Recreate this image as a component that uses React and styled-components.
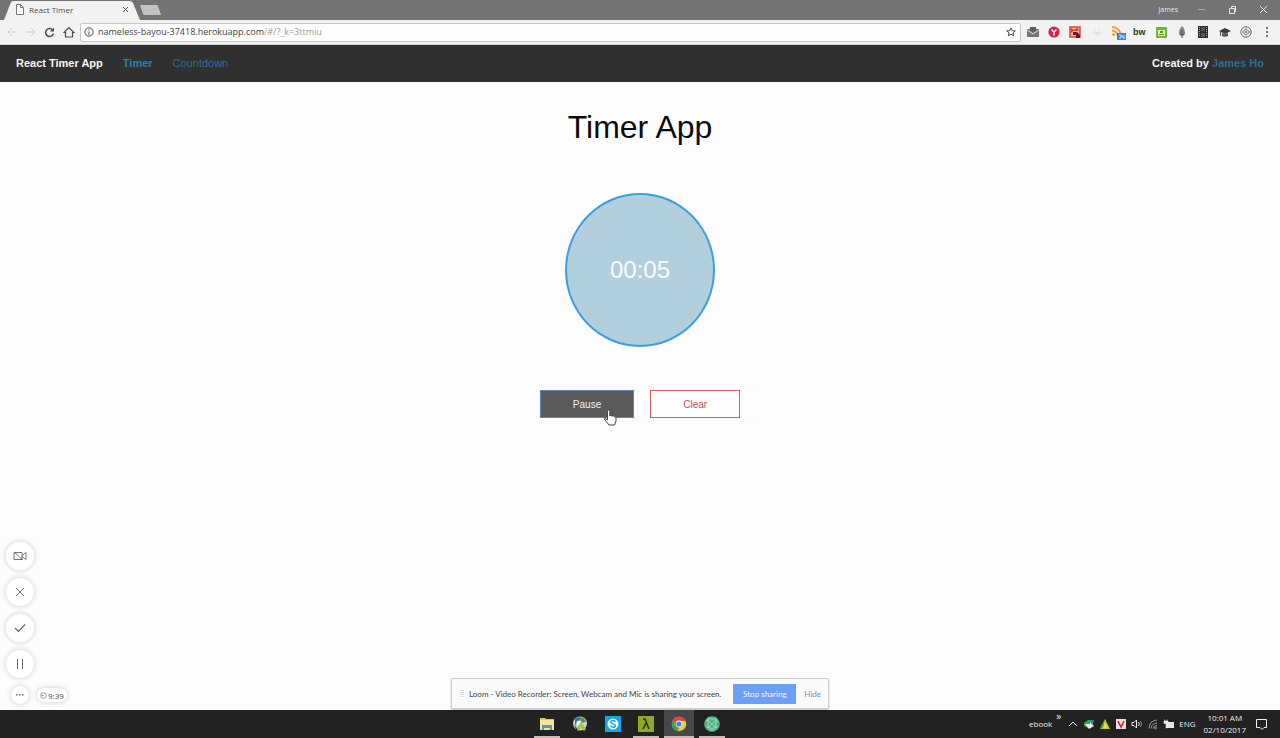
import React from 'react';
import styled, { createGlobalStyle, css } from 'styled-components';

const ui = '"Open Sans", "Noto Sans", sans-serif';
const arial = '"Liberation Sans", Arial, sans-serif';

const GlobalStyle = createGlobalStyle`
  *, *::before, *::after { box-sizing: border-box; }
  body { margin: 0; background: #fdfdfd; font-family: ${arial}; }
  button, input { font: inherit; margin: 0; }
  a { text-decoration: none; }
`;

const Screen = styled.div`
  display: flex;
  flex-direction: column;
  min-height: 100vh;
`;

const PlainButton = styled.button`
  display: inline-flex;
  align-items: center;
  justify-content: center;
  padding: 0;
  border: 0;
  background: none;
  color: inherit;
  cursor: pointer;
`;

/* ---------- browser window ---------- */

const TabStrip = styled.div`
  display: flex;
  align-items: flex-start;
  height: 20px;
  padding-left: 4px;
  background: #737373;
  font-family: ${ui};
`;

const Tab = styled.div`
  position: relative;
  display: flex;
  align-items: center;
  width: 136px;
  height: 20px;
  padding: 0 9px 1px 11px;
  color: #4c4c4c;
  font-size: 8px;
`;

const TabShape = styled.svg`
  position: absolute;
  inset: 0;
  width: 100%;
  height: 100%;
`;

const TabIcon = styled.svg`
  position: relative;
  width: 9px;
  height: 11px;
`;

const TabTitle = styled.span`
  position: relative;
  flex: 1;
  margin-left: 5px;
  padding-bottom: 1px;
`;

const TabClose = styled(PlainButton)`
  position: relative;
  width: 11px;
  height: 11px;
`;

const NewTab = styled(PlainButton)`
  margin-top: 4px;
`;

const WindowControls = styled.div`
  display: flex;
  align-items: center;
  height: 18px;
  margin-left: auto;
  padding-right: 9px;
  color: #e9e9e9;
  font-size: 7px;
`;

const WindowButton = styled(PlainButton)`
  width: 16px;
  height: 16px;
  margin-left: 15px;
`;

const Toolbar = styled.div`
  display: flex;
  align-items: center;
  height: 25px;
  padding: 0 2px;
  background: #f2f2f2;
  border-bottom: 1px solid #d4d4d4;
`;

const ToolButton = styled(PlainButton)`
  width: 19px;
  height: 19px;
  color: ${(p) => (p.$dim ? '#cccccc' : '#4d4d4d')};
`;

const AddressBar = styled.div`
  display: flex;
  flex: 1;
  align-items: center;
  height: 19px;
  margin: 0 1px 0 2px;
  padding: 0 4px 0 3px;
  border: 1px solid #c6c6c6;
  border-radius: 2px;
  background: #fefefe;
  color: #4d4d4d;
  font-family: ${ui};
`;

const Url = styled.div`
  flex: 1;
  margin-left: 4px;
  font-size: 9px;
  line-height: 16px;
  color: #3f3f3f;
`;

const UrlPath = styled.span`
  color: #9a9a9a;
`;

const Extensions = styled.div`
  display: grid;
  grid-template-columns: repeat(12, 1fr);
  width: 256px;
`;

const Extension = styled(PlainButton)`
  height: 20px;
`;

/* ---------- timer site ---------- */

const NavBar = styled.nav`
  display: flex;
  align-items: center;
  height: 37px;
  padding: 0 16px 2px;
  background: #303030;
  color: #f8f8f8;
  font-size: 11px;
  line-height: 16px;
`;

const Brand = styled.strong`
  margin-right: 20px;
`;

const NavLink = styled.a`
  margin-right: 20px;
  color: ${(p) => (p.$active ? '#2580bb' : '#236f9d')};
  font-weight: ${(p) => (p.$active ? 700 : 400)};
`;

const Credit = styled.strong`
  margin-left: auto;
  a { color: #226f9d; }
`;

const Page = styled.main`
  position: relative;
  display: flex;
  flex: 1;
  flex-direction: column;
  align-items: center;
  padding: 25px 0 96px;
  background: #fdfdfd;
`;

const Title = styled.h1`
  margin: 0;
  color: #0c0c0c;
  font-size: 32px;
  font-weight: 400;
  line-height: 40px;
`;

const Clock = styled.div`
  display: flex;
  align-items: center;
  justify-content: center;
  width: 150px;
  height: 154px;
  margin-top: 46px;
  border: 2px solid #3c9fdc;
  border-radius: 50%;
  background: #b2cfde;
  color: #fbfdff;
  font-size: 24px;
`;

const Controls = styled.div`
  display: flex;
  gap: 16px;
  margin-top: 43px;
`;

const ActionButton = styled.button`
  position: relative;
  height: 28px;
  padding: 0 32px;
  border: 1px solid #cf5f5b;
  background: #fefefe;
  color: #c9504d;
  font-family: ${arial};
  font-size: 10px;
  cursor: pointer;
  ${(p) => p.$focused && css`
    border-color: #6085b5;
    background: #5a5a5a;
    color: #f2f2f2;
  `}
`;

const Pointer = styled.svg`
  position: absolute;
  left: 62px;
  top: 18px;
  width: 14px;
  height: 17px;
`;

/* ---------- recorder overlay ---------- */

const RecorderDock = styled.div`
  position: absolute;
  left: 6px;
  bottom: 6px;
  display: flex;
  flex-direction: column;
  align-items: flex-start;
  gap: 8px;
  color: #666;
`;

const RecorderButton = styled(PlainButton)`
  width: ${(p) => (p.$small ? 18 : 28)}px;
  height: ${(p) => (p.$small ? 18 : 28)}px;
  border-radius: 50%;
  background: #fff;
  box-shadow: 0 0 5px 1px rgba(0, 0, 0, 0.15);
`;

const RecorderFoot = styled.div`
  display: flex;
  align-items: center;
  gap: 8px;
  padding-left: 5px;
`;

const Elapsed = styled.div`
  display: flex;
  align-items: center;
  gap: 1px;
  height: 14px;
  padding: 0 3px;
  border-radius: 7px;
  background: #fff;
  box-shadow: 0 0 4px 1px rgba(0, 0, 0, 0.14);
  color: #444;
  font-family: ${ui};
  font-size: 8px;
`;

const ShareBar = styled.div`
  position: absolute;
  left: 50%;
  bottom: 1px;
  display: flex;
  align-items: center;
  width: 378px;
  height: 31px;
  padding: 0 7px 0 8px;
  transform: translateX(-50%);
  border: 1px solid #cfcfcf;
  border-radius: 2px;
  background: #fafafa;
  box-shadow: 0 1px 2px rgba(0, 0, 0, 0.25);
  color: #444;
  font-family: Lato, ${ui};
  font-size: 8px;
  white-space: nowrap;
`;

const ShareText = styled.span`
  flex: 1;
  margin-left: 5px;
`;

const StopButton = styled(PlainButton)`
  width: 63px;
  height: 20px;
  background: #6c9ff5;
  color: #f5f8ff;
`;

const HideButton = styled(PlainButton)`
  margin-left: 8px;
  color: #6a8fc8;
`;

/* ---------- taskbar ---------- */

const Taskbar = styled.footer`
  display: grid;
  grid-template-columns: 1fr auto 1fr;
  height: 28px;
  background: #222222;
  color: #eeeeee;
  font-family: ${ui};
  font-size: 8px;
`;

const Apps = styled.div`
  display: flex;
  grid-column: 2;
  gap: 3px;
  padding-right: 22px;
`;

const AppButton = styled(PlainButton)`
  flex-direction: column;
  justify-content: flex-end;
  gap: 4px;
  width: 30px;
  background: ${(p) => (p.$active ? '#484848' : 'none')};
  &::after {
    content: '';
    width: ${(p) => (p.$active ? 30 : 26)}px;
    height: 2px;
    background: ${(p) => (p.$running ? '#c8b9b5' : 'transparent')};
  }
`;

const Tray = styled.div`
  display: flex;
  align-items: center;
  justify-content: flex-end;
  gap: 4px;
  padding-right: 12px;
`;

const TrayLabel = styled.span`
  padding-bottom: 2px;
`;

const TrayChevron = styled.span`
  align-self: flex-start;
  margin-right: 2px;
  font-size: 10px;
  line-height: 12px;
`;

const DateTime = styled.time`
  margin: 0 5px 0 4px;
  line-height: 12px;
  text-align: center;
`;

/* ---------- drawings ---------- */

const Line = ({ w = 12, h = w, box = `0 0 ${w} ${h}`, sw = 1, children, ...rest }) => (
  <svg width={w} height={h} viewBox={box} fill="none" stroke="currentColor" strokeWidth={sw} aria-hidden="true" {...rest}>
    {children}
  </svg>
);

const ExtensionLabel = styled.b`
  color: #173d18;
  font-family: ${arial};
  font-size: 9px;
  line-height: 12px;
`;

const extensions = [
  ['Mail', <Line w={12} stroke="none"><path d="M0 3h12v8H0z" fill="#777" /><path d="M0 4l6 4 6-4" stroke="#dedede" /><path d="M3 1h6v3L6 6 3 4z" fill="#5d5d5d" /></Line>],
  ['Yandex', <Line w={12} stroke="none"><circle cx="6" cy="6" r="5.600" fill="#df1f52" /><path d="M3.600 3.500L6 6.200l2.400-2.700M6 6v3.500" stroke="#fff" strokeWidth="1.500" /></Line>],
  ['Picture', <Line w={12} stroke="none"><path d="M1 1h10v10H1z" fill="#f0b1a8" stroke="#d8473c" strokeWidth="1.500" /><path d="M2 2l3 2 3-2 2 2-2 1H4L2 7z" fill="#cf3e35" /><path d="M4 6h4l3 3v3H7V9H4z" fill="#5f201a" /></Line>],
  ['Paw', <Line w={12} stroke="#dadada"><path d="M3 3l2 2M9 3L7 5M2 7h3M7 7h3M5 10l1-4 2 4" /></Line>],
  ['Feed', <Line w={16} h={16} stroke="none"><path d="M2 3a9 9 0 0 1 9 9M2 6.500A5.500 5.500 0 0 1 7.500 12" stroke="#eca23a" strokeWidth="2" /><circle cx="3.500" cy="10.500" r="1.500" fill="#eca23a" /><rect x="7" y="9" width="9" height="7" fill="#4382df" /><path d="M9 11h2v3H9M12 11v2h2m0-2v4" stroke="#c8dcf9" /></Line>],
  ['Builtwith', <ExtensionLabel>bw</ExtensionLabel>],
  ['Image tool', <Line w={12} stroke="none"><rect x="1" y="1" width="11" height="11" rx="1" fill="#79b529" /><path d="M3 4h7v6H3z" fill="#d8ecb7" /><path d="M5 5h3v2H5zM4 8h5v1H4z" fill="#609720" /></Line>],
  ['Drop', <Line w={12} stroke="none"><path d="M6 0c2 2 3 4 3 7a3 3 0 0 1-6 0c0-3 1-5 3-7z" fill="#858585" /><path d="M6 4v8M4 8l2 1 2-1" stroke="#555" /></Line>],
  ['Film', <Line w={12} stroke="none"><path d="M1 0h10v12H1z" fill="#2d2d2d" /><path d="M4 1h4v4H4zM4 7h4v4H4z" fill="#555" /><path d="M2.500 1v10M9.500 1v10" stroke="#aaa" strokeDasharray="1 1" /></Line>],
  ['Scholar', <Line w={12} stroke="none"><path d="M0 5l6-3 6 3-6 3z" fill="#3c3c3c" /><path d="M3 7v3c2 1 4 1 6 0V7L6 8z" fill="#555" /><path d="M1.500 5v5" stroke="#555" /></Line>],
  ['Target', <Line w={12} stroke="#6b6b6b"><circle cx="6" cy="6" r="5.200" /><path d="M6 2.500L9.500 6 6 9.500 2.500 6z" /><circle cx="6" cy="6" r="1" /></Line>],
  ['Menu', <Line w={12} stroke="none" fill="#555"><circle cx="6" cy="2" r="1.100" /><circle cx="6" cy="6" r="1.100" /><circle cx="6" cy="10" r="1.100" /></Line>],
];

const apps = [
  { name: 'File Explorer', running: true, icon: <Line w={16} stroke="none"><path d="M1 2h5l1 1h8v11H1z" fill="#e9c65c" /><path d="M1 4h14v10H1z" fill="#f9e695" /><path d="M3 9h10v5h-2v-2H5v2H3z" fill="#4c99ce" /></Line> },
  { name: 'Media', icon: <Line w={16} stroke="none"><circle cx="8" cy="7.500" r="7" fill="#c6d7df" /><path d="M3 3a7 7 0 0 1 5-2v5L3 9z" fill="#3370a6" /><path d="M8 1a7 7 0 0 1 6 5L9 7z" fill="#568f4a" /><circle cx="7" cy="7" r="2.600" fill="#eef4f5" /><path d="M4 13l5-7 5 7-2 2-3-3-3 3z" fill="#a2c92f" /><path d="M2 8l4 6H4z" fill="#294a64" /></Line> },
  { name: 'Skype', icon: <Line w={16} stroke="none"><path d="M0 0h16v16H0z" fill="#14a7e3" /><circle cx="8" cy="8" r="5.500" fill="#f3fbff" /><path d="M10.500 5.800C9.500 4 5.500 4.300 5.700 6.300c.2 2 4.700 1.200 4.700 3.300 0 2.100-4 2.100-5-.1" stroke="#199fd8" strokeWidth="1.500" /></Line> },
  { name: 'Cmder', running: true, icon: <Line w={16} stroke="none"><path d="M0 0h16v16H0z" fill="#8cab24" /><path d="M5 3h2l4 10M8 7l-3 6" stroke="#26320b" strokeWidth="1.600" /></Line> },
  { name: 'Chrome', running: true, active: true, icon: <Line w={16} stroke="none"><circle cx="8" cy="8" r="7.200" fill="#f0c93c" /><path d="M1.800 4.300A7.200 7.200 0 0 1 14.500 5H8L5 9.800z" fill="#d84b3c" /><path d="M1.800 4.300L5 9.800 8 11l-1 4.200A7.200 7.200 0 0 1 1.800 4.300z" fill="#42a052" /><circle cx="8" cy="8" r="3.400" fill="#f5f5f5" /><circle cx="8" cy="8" r="2.600" fill="#4386d8" /></Line> },
  { name: 'Atom', running: true, icon: <Line w={16} stroke="none"><circle cx="8" cy="8" r="7.800" fill="#56b587" /><path d="M2 5c4-3 8-3 12 1M2 10c4 3 8 3 12 0M5 1c-2 5-1 10 3 14M11 1c2 5 1 10-3 14M3 4l10 8M13 4L3 12" stroke="#a4dabd" strokeWidth=".8" /></Line> },
];

export default function App() {
  return (
    <>
      <GlobalStyle />
      <Screen>
        <TabStrip>
          <Tab>
            <TabShape viewBox="0 0 136 20" preserveAspectRatio="none" aria-hidden="true">
              <path d="M0 20L7 2Q8 1 10 1H126Q128 1 129 3L136 20z" fill="#f2f2f2" />
            </TabShape>
            <TabIcon viewBox="0 0 9 11" fill="#fafafa" stroke="#777">
              <path d="M1.500.5h4l3 3v7h-7zM5.500.5v3h3" />
            </TabIcon>
            <TabTitle>React Timer</TabTitle>
            <TabClose aria-label="Close tab"><Line w={7}><path d="M1 1l5 5M6 1L1 6" /></Line></TabClose>
          </Tab>
          <NewTab aria-label="New tab">
            <Line w={21} h={12} stroke="none"><path d="M0 1h16q2 0 2 1l3 9H5q-2 0-2-1z" fill="#c2c2c2" /></Line>
          </NewTab>
          <WindowControls>
            <span>James</span>
            <WindowButton aria-label="Minimize"><Line w={9}><path d="M1 4.500h7" stroke="#aaa" /></Line></WindowButton>
            <WindowButton aria-label="Restore"><Line w={9}><path d="M1.500 3.500h5v5h-5zM3.500 3V1.500h4v5H7" /></Line></WindowButton>
            <WindowButton aria-label="Close"><Line w={9}><path d="M1 1l7 7M8 1L1 8" /></Line></WindowButton>
          </WindowControls>
        </TabStrip>
        <Toolbar>
          <ToolButton aria-label="Back" $dim><Line w={10}><path d="M9 5H1M5 1L1 5l4 4" /></Line></ToolButton>
          <ToolButton aria-label="Forward" $dim><Line w={10}><path d="M1 5h8M5 1l4 4-4 4" /></Line></ToolButton>
          <ToolButton aria-label="Reload"><Line w={11} sw={1.5}><path d="M8.800 3A4 4 0 1 0 9.500 6.500" /><path d="M10 .5v4H6z" fill="currentColor" stroke="none" /></Line></ToolButton>
          <ToolButton aria-label="Home"><Line w={12}><path d="M1 6.500l5-5 5 5H9.500V11h-7V6.500z" strokeWidth="1.200" /></Line></ToolButton>
          <AddressBar>
            <Line w={10}><circle cx="5" cy="5" r="4.200" /><path d="M5 4.500V8M5 2.300v1.200" /></Line>
            <Url>nameless-bayou-37418.herokuapp.com<UrlPath>/#/?_k=3ttmiu</UrlPath></Url>
            <PlainButton aria-label="Bookmark"><Line w={10}><path d="M5 .8l1.200 2.900 3.100.2-2.400 2 .8 3L5 7.200 2.300 8.900l.8-3-2.400-2 3.100-.2z" /></Line></PlainButton>
          </AddressBar>
          <Extensions>
            {extensions.map(([name, icon]) => (
              <Extension key={name} aria-label={name}>{icon}</Extension>
            ))}
          </Extensions>
        </Toolbar>

        <NavBar>
          <Brand>React Timer App</Brand>
          <NavLink href="#/" $active>Timer</NavLink>
          <NavLink href="#/countdown">Countdown</NavLink>
          <Credit>Created by <a href="#james">James Ho</a></Credit>
        </NavBar>

        <Page>
          <Title>Timer App</Title>
          <Clock role="timer">00:05</Clock>
          <Controls>
            <ActionButton $focused>
              Pause
              <Pointer viewBox="0 0 14 17" fill="#fff" stroke="#444" strokeLinejoin="round">
                <path d="M4.500 9V2.500Q4.500 1 5.500 1T6.800 2.500V7l1-.7 1.200.9 1.200-.5 1 .9Q13 7.500 13 9v3l-1.500 4H6L2 11q-1.500-2 0-2l2.500 2z" />
              </Pointer>
            </ActionButton>
            <ActionButton>Clear</ActionButton>
          </Controls>

          <RecorderDock>
            <RecorderButton aria-label="Camera off"><Line w={14} h={10} sw={0.9}><path d="M1 1.500h8v7H1zM9 4.500l4-3v7l-4-3M1 1l9 8" /></Line></RecorderButton>
            <RecorderButton aria-label="Cancel recording"><Line w={10}><path d="M1 1l8 8M9 1L1 9" /></Line></RecorderButton>
            <RecorderButton aria-label="Finish recording"><Line w={12} h={10} sw={1.2}><path d="M1 5l3.500 3.500L11 1.500" /></Line></RecorderButton>
            <RecorderButton aria-label="Pause recording"><Line w={8} h={12}><path d="M1.500 1v10M6.500 1v10" /></Line></RecorderButton>
            <RecorderFoot>
              <RecorderButton $small aria-label="More"><Line w={8} h={2} stroke="none" fill="#777"><path d="M0 0h1.500v1.500H0zM3 0h1.500v1.500H3zM6 0h1.500v1.500H6z" /></Line></RecorderButton>
              <Elapsed><Line w={7} stroke="#999"><circle cx="3.500" cy="3.500" r="2.800" /><path d="M1.500 3.500h2" /></Line>9:39</Elapsed>
            </RecorderFoot>
          </RecorderDock>

          <ShareBar>
            <Line w={4} h={8} stroke="#c4c4c4"><path d="M1 0v8M3 0v8" strokeDasharray="1 1" /></Line>
            <ShareText>Loom - Video Recorder: Screen, Webcam and Mic is sharing your screen.</ShareText>
            <StopButton>Stop sharing</StopButton>
            <HideButton>Hide</HideButton>
          </ShareBar>
        </Page>

        <Taskbar>
          <Apps>
            {apps.map((app) => (
              <AppButton key={app.name} aria-label={app.name} $running={app.running} $active={app.active}>{app.icon}</AppButton>
            ))}
          </Apps>
          <Tray>
            <TrayLabel>ebook</TrayLabel>
            <TrayChevron>»</TrayChevron>
            <Line w={12}><path d="M2 8l4-4 4 4" /></Line>
            <Line w={12} stroke="none"><path d="M1 5l4-3h6L9 8l-4 2-4-2z" fill="#35a34a" /><path d="M2 6h5V4l4 4-5 3z" fill="#e9eee9" /><path d="M6 2h5L9 6z" fill="#238a9b" /></Line>
            <Line w={12} stroke="none"><path d="M6 1l5 10H1z" fill="#bcc82f" /><path d="M6 1L1 11l3-1z" fill="#4b9b48" /><path d="M6 4l3 6H4z" fill="#eedc41" /></Line>
            <Line w={12} stroke="none"><path d="M1 1h10v10H1z" fill="#f0dede" /><path d="M3 3l3 6 3-6" stroke="#c22935" strokeWidth="1.600" /></Line>
            <Line w={12}><path d="M1 4.500h2L5.500 2v8L3 7.500H1zM7.500 4q1.500 2 0 4" /><path d="M9.500 3q2.500 3 0 6" stroke="#888" /></Line>
            <Line w={12} stroke="#999"><path d="M2 10.500Q2 3 10 2M4 10.500Q4 6 10 5M6 10.500Q6.500 8 10 7.500" /><circle cx="8.500" cy="10" r="1" /></Line>
            <Line w={12} stroke="none"><path d="M4 4h7v6H3V7z" fill="#e6e6e6" /><path d="M1 3h4v2.500H4V10H3V5.500H1zM1.500 1.500v2M4 1.500v2" fill="#eee" stroke="#eee" strokeWidth=".6" /></Line>
            <TrayLabel>ENG</TrayLabel>
            <DateTime dateTime="2017-10-02T10:01">10:01 AM<br />02/10/2017</DateTime>
            <Line w={13} h={14}><path d="M1.500 2.500h10v8H9l-2 2-2-2H1.500z" /></Line>
          </Tray>
        </Taskbar>
      </Screen>
    </>
  );
}
